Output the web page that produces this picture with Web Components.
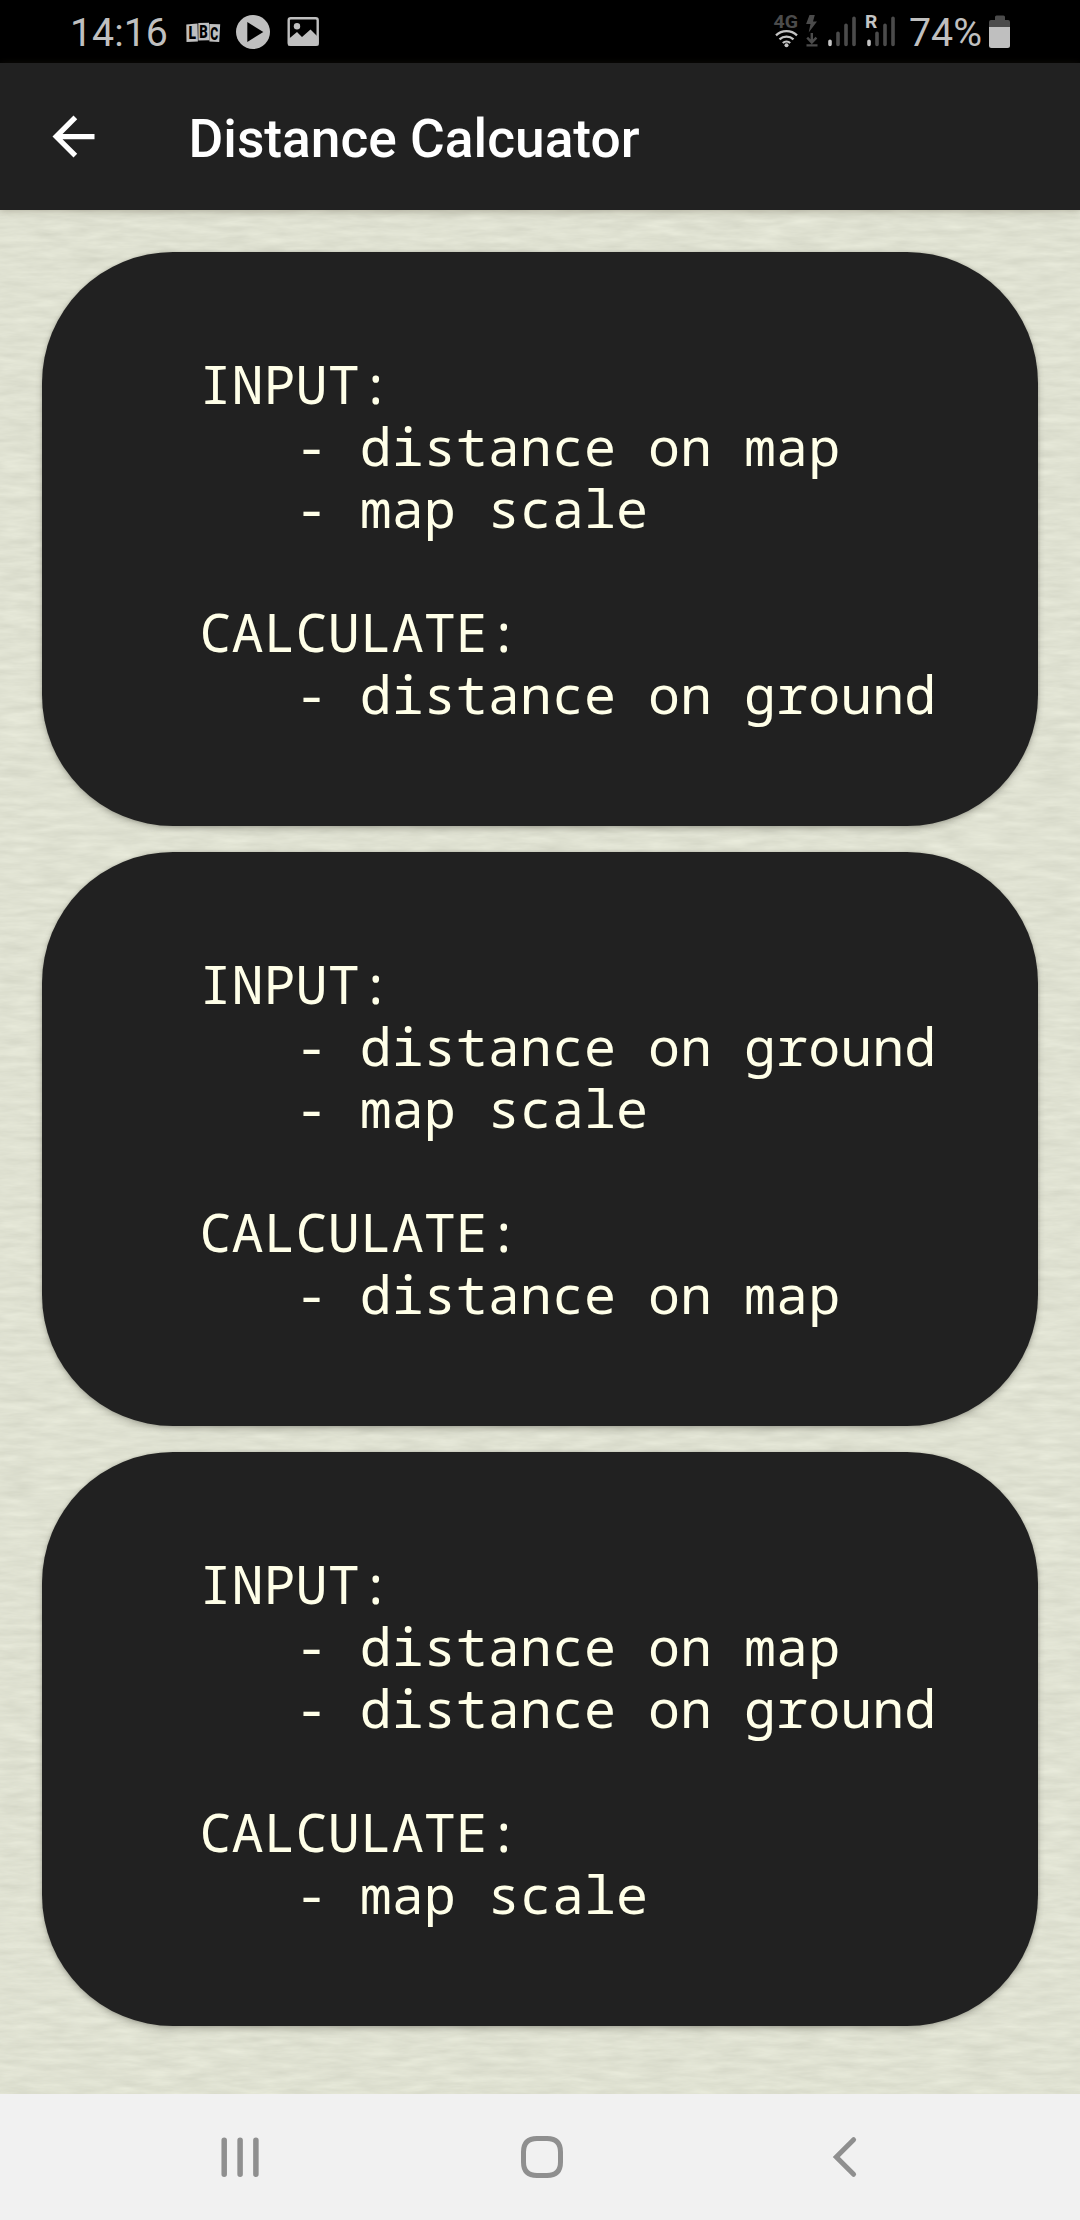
<!DOCTYPE html>
<html lang="en">
<head>
<meta charset="utf-8">
<title>Distance Calcuator</title>
<style>
html,body{margin:0;padding:0}
body{width:1080px;height:2220px;overflow:hidden}
</style>
</head>
<body>
<distance-app></distance-app>
<script>
function define(name, html){
  const t=document.createElement('template');
  t.innerHTML=html;
  customElements.define(name, class extends HTMLElement{
    constructor(){super();this.attachShadow({mode:'open'}).appendChild(t.content.cloneNode(true));}
  });
}

define('status-bar', `
<style>
:host{display:flex;box-sizing:border-box;height:63px;background:#000;color:#bfbfbf;font:400 39.3px/46px Roboto,sans-serif;padding:10px 67px 0 70px;justify-content:space-between}
.g{display:flex;align-items:flex-start}
svg{display:block;margin-top:-10px;flex:none}
.time{width:116px}.pct{width:78px;margin-left:1px;white-space:nowrap}
.time,.pct{display:block}
</style>
<div class="g">
  <span class="time">14:16</span>
  <svg width="140" height="63" viewBox="186 0 140 63">
    <g fill="#bfbfbf"><path d="M186.3 24.5l11.2-1 .4 18-11.4.6zM198.3 23l10.7-.3.2 17.6-10.8.2zM209.4 23.9l10.8.3-1 17.8-9.8-.5z"/></g>
    <g font-family="Roboto,sans-serif" font-weight="900" font-size="19" fill="#000">
      <text x="188.5" y="39.2" textLength="7.5" lengthAdjust="spacingAndGlyphs">L</text>
      <text x="199.3" y="38" textLength="8.5" lengthAdjust="spacingAndGlyphs">B</text>
      <text x="210.2" y="40" textLength="8" lengthAdjust="spacingAndGlyphs">C</text>
    </g>
    <circle cx="253" cy="32" r="17" fill="#bfbfbf"/><path d="M247.3 22v20l16-10z" fill="#000"/>
    <rect x="288.7" y="18.2" width="29" height="26.6" rx="2" fill="none" stroke="#bfbfbf" stroke-width="2.4"/>
    <circle cx="297" cy="26.2" r="3.2" fill="#bfbfbf"/>
    <path d="M288 39.5l9-7.5 5 5 8.5-7.5 8 8v8H288z" fill="#bfbfbf"/>
  </svg>
</div>
<div class="g">
  <svg width="136" height="63" viewBox="771.500 0 136 63">
    <text x="773" y="27.7" font-family="Roboto,sans-serif" font-weight="700" font-size="18" textLength="24.5" lengthAdjust="spacingAndGlyphs" fill="#4b4b4b">4G</text>
    <g fill="none" stroke="#c4c4c4" stroke-width="2.3">
      <path d="M775.5 35.3a15.5 15.5 0 0 1 21 0M779 39.3a10.3 10.3 0 0 1 14 0M782.3 43a5.6 5.6 0 0 1 7.4 0"/></g>
    <circle cx="786" cy="45.3" r="2" fill="#c4c4c4"/>
    <path d="M809 15h5.3l-1.8 6.5h4l-8.3 11 1.8-8.4h-4.4z" fill="#4b4b4b"/>
    <path d="M811.3 33v9M806.7 37.6l4.6 4.8 4.6-4.8M806 45.4h11" fill="none" stroke="#4b4b4b" stroke-width="2.4"/>
    <g stroke-width="3.6" stroke-linecap="round" stroke="#4b4b4b">
      <path d="M837.5 33.2v11.3M845.5 25.2v19.3M853.5 18.2v26.3M876.5 33.2v11.3M884.5 25.2v19.3M892.5 18.2v26.3"/>
      <path d="M829.5 41.2v3.3M868.5 41.2v3.3" stroke="#c4c4c4"/></g>
    <text x="864.4" y="27.8" font-family="Roboto,sans-serif" font-weight="700" font-size="18.5" textLength="12.3" lengthAdjust="spacingAndGlyphs" fill="#c4c4c4">R</text>
  </svg>
  <span class="pct">74%</span>
  <svg width="26" height="63" viewBox="987 0 26 63">
    <path d="M989 27v-5a2 2 0 0 1 2-2h4v-3q0-1.500 1.500-1.500h7q1.500 0 1.500 1.500v3h3a2 2 0 0 1 2 2v5z" fill="#4b4b4b"/>
    <path d="M989 27h21v18.500a2.500 2.500 0 0 1-2.500 2.500h-16a2.500 2.500 0 0 1-2.500-2.500z" fill="#bfbfbf"/>
  </svg>
</div>`);

define('app-bar', `
<style>
:host{display:flex;align-items:center;box-sizing:border-box;height:147px;padding:0 42px;background:#212121;color:#fff;position:relative;z-index:1;box-shadow:0 1px 8px rgba(60,50,30,.3)}
svg{display:block;width:63px;height:63px}
h1{margin:4px 0 0 83.500px;font:500 53.300px/62px Roboto,sans-serif;white-space:nowrap}
</style>
<svg viewBox="0 0 24 24"><path fill="#fff" d="M20 11H7.830l5.590-5.590L12 4l-8 8 8 8 1.410-1.410L7.830 13H20z"/></svg>
<h1><slot></slot></h1>`);

define('calc-card', `
<style>
:host{display:block;box-sizing:border-box;height:574px;border-radius:131px;background:#212121;color:#ffffe8;padding:101px 0 0 157.500px;box-shadow:0 3px 6px rgba(60,60,50,.3),0 0 3px rgba(60,60,50,.2)}
pre{margin:0;font:400 53.400px/62px "Droid Sans Mono","Noto Sans Mono","DejaVu Sans Mono",monospace}
</style>
<pre><slot></slot></pre>`);

define('paper-area', `
<style>
:host{display:grid;height:1884px;background:#e1e3d3}
svg{grid-area:1/1;display:block}
main{grid-area:1/1;display:flex;flex-direction:column;gap:26px;padding:42px;z-index:0}
</style>
<svg width="1080" height="1884">
  <filter id="grain" x="0" y="0" width="100%" height="100%" color-interpolation-filters="sRGB">
    <feTurbulence type="fractalNoise" baseFrequency=".028 .15" numOctaves="4" seed="8"/>
    <feColorMatrix values=".08 .04 0 0 .815  .08 .04 0 0 .823  .08 .04 0 0 .762  0 0 0 0 1"/>
  </filter>
  <rect width="1080" height="1884" filter="url(#grain)"/>
</svg>
<main><slot></slot></main>`);

define('nav-bar', `
<style>
:host{display:flex;justify-content:space-between;align-items:center;box-sizing:border-box;height:126px;background:#f1f1f1;padding:0 209px}
svg{display:block;width:62px;height:62px;fill:none;stroke:#8f8f8f;stroke-linecap:round}
</style>
<svg viewBox="209 2126 62 62"><path stroke-width="5.500" d="M224.200 2140.200v34M240.100 2140.200v34M255.900 2140.200v34"/></svg>
<svg viewBox="509 2126 62 62"><path stroke-width="5" d="M537 2138.500h10q13.500 0 13.500 13.500v10q0 13.500-13.500 13.500h-10q-13.500 0-13.500-13.500v-10q0-13.500 13.500-13.500z"/></svg>
<svg viewBox="809 2126 62 62"><path stroke-width="5" d="M853.600 2139.700l-17.300 17.300 17.300 17.300"/></svg>`);

define('distance-app', `
<style>:host{display:flex;flex-direction:column;width:1080px;height:2220px}</style>
<status-bar></status-bar>
<app-bar>Distance Calcuator</app-bar>
<paper-area>
<calc-card>INPUT:
   - distance on map
   - map scale

CALCULATE:
   - distance on ground</calc-card>
<calc-card>INPUT:
   - distance on ground
   - map scale

CALCULATE:
   - distance on map</calc-card>
<calc-card>INPUT:
   - distance on map
   - distance on ground

CALCULATE:
   - map scale</calc-card>
</paper-area>
<nav-bar></nav-bar>`);
</script>
</body>
</html>
